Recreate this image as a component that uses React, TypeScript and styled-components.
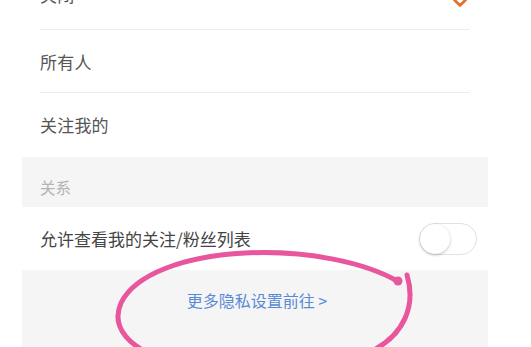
import React from "react";
import styled, { createGlobalStyle } from "styled-components";

const Global = createGlobalStyle`
  html, body { margin: 0; padding: 0; background: #ffffff; overflow: hidden; }
  body { font-family: "Noto Sans CJK SC", "Noto Sans", sans-serif; }
`;

const Screen = styled.div`
  position: relative;
  width: 531px;
  height: 347px;
  overflow: hidden;
  background: #ffffff;
`;

const Column = styled.div`
  width: 466px;
  margin-left: 22px;
  margin-top: -33px;
  display: flex;
  flex-direction: column;
`;

const OptionRow = styled.div<{ $last?: boolean; $raised?: boolean }>`
  height: 63px;
  margin: 0 18px;
  display: flex;
  align-items: center;
  justify-content: space-between;
  border-bottom: ${(p) => (p.$last ? "none" : "1px solid #ececec")};
  box-sizing: border-box;
  padding-bottom: ${(p) => (p.$raised ? "8px" : "0")};
`;

const RowText = styled.span`
  font-size: 17px;
  color: #555555;
  letter-spacing: 0.2px;
`;

const SectionHeader = styled.div`
  height: 50px;
  background: #f5f5f5;
  display: flex;
  align-items: flex-end;
  padding: 0 18px 9px;
  box-sizing: border-box;
  margin-top: 1px;
`;

const SectionLabel = styled.span`
  font-size: 15.5px;
  color: #b3b3b3;
`;

const ToggleRow = styled.div`
  height: 63px;
  padding: 0 11px 0 18px;
  display: flex;
  align-items: center;
  justify-content: space-between;
  background: #ffffff;
`;

const ToggleText = styled.span`
  font-size: 17px;
  color: #444444;
`;

const Toggle = styled.div`
  width: 58px;
  height: 32px;
  border-radius: 16px;
  border: 1px solid #e2e2e2;
  background: #ffffff;
  box-sizing: border-box;
  position: relative;
`;

const Knob = styled.div`
  position: absolute;
  left: 0;
  top: 0;
  width: 30px;
  height: 30px;
  border-radius: 50%;
  background: #ffffff;
  box-shadow: 0 1px 3px rgba(0, 0, 0, 0.25);
`;

const Footer = styled.div`
  height: 100px;
  background: #f5f5f5;
  display: flex;
  justify-content: center;
  padding-top: 19px;
  box-sizing: border-box;
`;

const MoreLink = styled.span`
  font-size: 16px;
  color: #5a8ad6;
  height: 22px;
  line-height: 22px;
  margin-left: 4px;
`;

const Check = styled.svg`
  width: 16px;
  height: 16px;
  margin-right: 2px;
  margin-top: 18px;
`;

const Annotation = styled.svg`
  position: absolute;
  left: 0;
  top: 0;
  pointer-events: none;
`;

export default function App() {
  return (
    <Screen>
      <Global />
      <Column>
        <OptionRow $raised>
          <RowText>关闭</RowText>
          <Check viewBox="0 0 16 16">
            <path d="M2.5 5 L8 10.5 L13.5 5" fill="none" stroke="#e66f2e" strokeWidth="2.8" strokeLinecap="round" strokeLinejoin="round" />
          </Check>
        </OptionRow>
        <OptionRow>
          <RowText>所有人</RowText>
        </OptionRow>
        <OptionRow $last>
          <RowText>关注我的</RowText>
        </OptionRow>
        <SectionHeader>
          <SectionLabel>关系</SectionLabel>
        </SectionHeader>
        <ToggleRow>
          <ToggleText>允许查看我的关注/粉丝列表</ToggleText>
          <Toggle>
            <Knob />
          </Toggle>
        </ToggleRow>
        <Footer>
          <MoreLink>更多隐私设置前往 &gt;</MoreLink>
        </Footer>
      </Column>
      <Annotation width="531" height="347" viewBox="0 0 531 347">
        <path
          d="M 399 282 C 365 262, 305 250, 245 253 C 185 256, 135 274, 121 303 C 110 328, 130 348, 165 360 C 240 380, 330 372, 370 352 C 405 335, 416 305, 407 275"
          fill="none"
          stroke="#e8579e"
          strokeWidth="5"
          strokeLinecap="round"
        />
        <circle cx="398" cy="281" r="4.5" fill="#e8579e" />
      </Annotation>
    </Screen>
  );
}
